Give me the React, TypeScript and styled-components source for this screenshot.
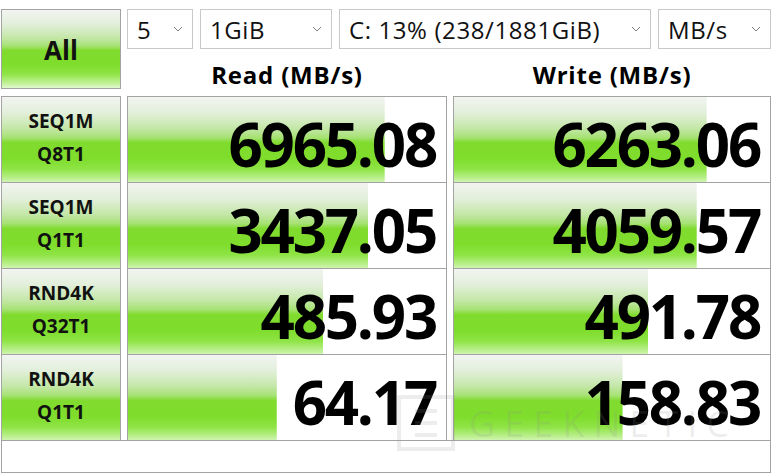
import React from "react";
import styled, { createGlobalStyle } from "styled-components";

const GlobalStyle = createGlobalStyle`
  html, body { margin: 0; padding: 0; background: #ffffff; }
  body { font-family: "Open Sans", "Noto Sans", "Liberation Sans", sans-serif; color: #000; }
`;

const greenGradient = `linear-gradient(to bottom,
  #f2f4f1 0%,
  #e2efda 18%,
  #c3e7a6 36%,
  #a6e274 46%,
  #80db2e 52%,
  #7fdd2c 70%,
  #8fe446 82%,
  #c2f19a 94%,
  #e2f8d0 100%)`;

const Page = styled.div`
  position: relative;
  width: 780px;
  height: 473px;
  overflow: hidden;
  box-sizing: border-box;
  padding: 9px 9px 0 1px;
  display: flex;
  flex-direction: column;
  gap: 7px;
`;

const TopBar = styled.div`
  display: grid;
  grid-template-columns: 120px 1fr;
  column-gap: 6px;
  height: 80px;
`;

const GreenButton = styled.div`
  box-sizing: border-box;
  border: 1px solid #a3a3a3;
  background: ${greenGradient};
  display: flex;
  flex-direction: column;
  align-items: center;
  justify-content: center;
  font-weight: 700;
  color: #111;
`;

const AllButton = styled(GreenButton)`
  height: 80px;
  font-size: 26px;
  padding-top: 2px;
`;

const TopRight = styled.div`
  display: flex;
  flex-direction: column;
`;

const Controls = styled.div`
  display: flex;
  gap: 7px;
  height: 40px;
`;

const Select = styled.div<{ $w?: number }>`
  box-sizing: border-box;
  height: 40px;
  ${(p) => (p.$w ? `width: ${p.$w}px;` : "flex: 1;")}
  border: 1px solid #c9c9c9;
  background: #fff;
  display: flex;
  align-items: center;
  justify-content: space-between;
  padding: 0 9px 0 9px;
  font-size: 24px;
  letter-spacing: 0.6px;
  color: #111;
  white-space: nowrap;
`;

const Chevron = styled.svg`
  flex: none;
  width: 10px;
  height: 6px;
`;

const Headers = styled.div`
  display: grid;
  grid-template-columns: 320px 318px;
  column-gap: 6px;
  height: 40px;
`;

const HeaderText = styled.div`
  display: flex;
  align-items: center;
  justify-content: center;
  font-size: 24px;
  font-weight: 700;
  letter-spacing: 0.8px;
  padding-top: 9px;
`;

const Row = styled.div`
  display: grid;
  grid-template-columns: 120px 320px 318px;
  column-gap: 6px;
  height: 79px;
`;

const LabelButton = styled(GreenButton)`
  font-size: 19px;
  line-height: 33px;
  padding-bottom: 6px;
`;

const Cell = styled.div`
  box-sizing: border-box;
  border: 1px solid #a3a3a3;
  background: ${greenGradient} no-repeat left top, #ffffff;
  display: flex;
  align-items: center;
  justify-content: flex-end;
  padding: 6px 10px 0 0;
  font-size: 60px;
  font-weight: 700;
  letter-spacing: -2.2px;
  color: #000;
`;

const Footer = styled.div`
  box-sizing: border-box;
  height: 60px;
  border: 1px solid #a3a3a3;
  background: #fff;
`;

const Watermark = styled.div`
  position: absolute;
  left: 397px;
  top: 395px;
  display: flex;
  align-items: center;
  gap: 14px;
  pointer-events: none;
  color: rgba(140, 140, 140, 0.16);
`;

const WatermarkLogo = styled.svg`
  width: 58px;
  height: 56px;
`;

const WatermarkText = styled.div`
  font-family: "Open Sans", sans-serif;
  font-size: 36px;
  font-weight: 400;
  letter-spacing: 9px;
`;

const ChevronIcon = () => (
  <Chevron viewBox="0 0 10 6">
    <polyline points="1,1 5,5 9,1" fill="none" stroke="#808080" strokeWidth="1" />
  </Chevron>
);

type Result = { l1: string; l2: string; read: number; write: number };

const results: Result[] = [
  { l1: "SEQ1M", l2: "Q8T1", read: 6965.08, write: 6263.06 },
  { l1: "SEQ1M", l2: "Q1T1", read: 3437.05, write: 4059.57 },
  { l1: "RND4K", l2: "Q32T1", read: 485.93, write: 491.78 },
  { l1: "RND4K", l2: "Q1T1", read: 64.17, write: 158.83 },
];

const meter = (v: number) => Math.max(0, Math.min(1, (Math.log10(v) + 1) / 6));

const ScoreCell = ({ value }: { value: number }) => (
  <Cell style={{ backgroundSize: `${(meter(value) * 100).toFixed(2)}% 100%, 100% 100%` }}>
    {value.toFixed(2)}
  </Cell>
);

export default function App() {
  return (
    <>
      <GlobalStyle />
      <Page>
        <TopBar>
          <AllButton>All</AllButton>
          <TopRight>
            <Controls>
              <Select $w={66}>
                <span>5</span>
                <ChevronIcon />
              </Select>
              <Select $w={132}>
                <span>1GiB</span>
                <ChevronIcon />
              </Select>
              <Select $w={312}>
                <span>C: 13% (238/1881GiB)</span>
                <ChevronIcon />
              </Select>
              <Select>
                <span>MB/s</span>
                <ChevronIcon />
              </Select>
            </Controls>
            <Headers>
              <HeaderText>Read (MB/s)</HeaderText>
              <HeaderText>Write (MB/s)</HeaderText>
            </Headers>
          </TopRight>
        </TopBar>
        {results.map((r, i) => (
          <Row key={i}>
            <LabelButton>
              <span>{r.l1}</span>
              <span>{r.l2}</span>
            </LabelButton>
            <ScoreCell value={r.read} />
            <ScoreCell value={r.write} />
          </Row>
        ))}
        <Footer />
        <Watermark>
          <WatermarkLogo viewBox="0 0 58 56">
            <rect x="2" y="2" width="54" height="52" fill="none" stroke="currentColor" strokeWidth="4" />
            <rect x="18" y="14" width="22" height="4" fill="currentColor" />
            <rect x="18" y="26" width="22" height="4" fill="currentColor" />
            <rect x="18" y="38" width="22" height="4" fill="currentColor" />
          </WatermarkLogo>
          <WatermarkText>GEEKNETIC</WatermarkText>
        </Watermark>
      </Page>
    </>
  );
}
